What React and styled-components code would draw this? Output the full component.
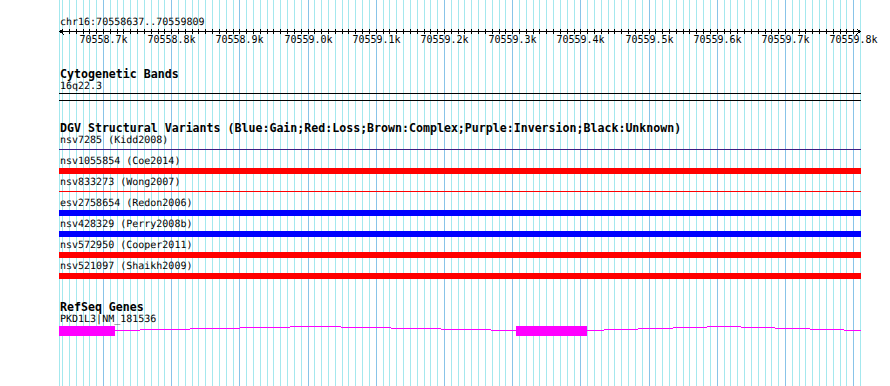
import styled, { createGlobalStyle } from "styled-components";

const START = 70558637;
const END = 70559809;
const LEFT = 60;
const SCALE = 800 / (END - START + 1);
const TRACK_X = 59;
const TRACK_W = 802;

const toX = (bp) => Math.round(LEFT + (bp - START) * SCALE);

const GlobalStyle = createGlobalStyle`
  html, body {
    margin: 0;
    padding: 0;
    background: #ffffff;
  }
`;

const Panel = styled.div`
  position: relative;
  width: 890px;
  height: 386px;
  overflow: hidden;
  background: #ffffff;
  font-family: "DejaVu Sans Mono", "Liberation Mono", monospace;
  color: #000000;
`;

const GridLayer = styled.svg`
  position: absolute;
  left: 0;
  top: 0;
  z-index: 0;
`;

const Content = styled.div`
  position: relative;
  z-index: 1;
  display: flex;
  flex-direction: column;
  padding: 16px 0 0 ${TRACK_X}px;
`;

const Label = styled.div`
  height: 13px;
  line-height: 13px;
  font-size: 10px;
  padding-left: 1px;
  white-space: nowrap;
  text-rendering: geometricPrecision;
`;

const Title = styled.div`
  height: 12px;
  line-height: 12px;
  font-size: 11.6px;
  font-weight: bold;
  padding-left: 1px;
  margin-top: ${(p) => p.$gap}px;
  white-space: nowrap;
`;

const Ruler = styled.svg`
  display: block;
  font-family: "DejaVu Sans Mono", "Liberation Mono", monospace;
`;

const CytoBand = styled.div`
  box-sizing: border-box;
  width: ${TRACK_W}px;
  height: 8px;
  border-top: 1px solid #000000;
  border-bottom: 1px solid #000000;
`;

const FeatureRow = styled.div`
  display: flex;
  flex-direction: column;
  height: 21px;
`;

const Glyph = styled.div`
  width: ${TRACK_W}px;
  height: ${(p) => (p.$thin ? 1 : 6)}px;
  margin-top: ${(p) => (p.$thin ? 2 : 0)}px;
  background: ${(p) => p.$color};
`;

const GeneTrack = styled.svg`
  display: block;
`;

const variants = [
  { name: "nsv7285 (Kidd2008)", color: "#3c1c84", thin: true },
  { name: "nsv1055854 (Coe2014)", color: "#ff0000" },
  { name: "nsv833273 (Wong2007)", color: "#ff0000", thin: true },
  { name: "esv2758654 (Redon2006)", color: "#0000ff" },
  { name: "nsv428329 (Perry2008b)", color: "#0000ff" },
  { name: "nsv572950 (Cooper2011)", color: "#ff0000" },
  { name: "nsv521097 (Shaikh2009)", color: "#ff0000" },
];

const ticks = [];
for (let bp = 70558640; bp <= 70559810; bp += 10) {
  ticks.push({ bp, x: toX(bp), major: bp % 100 === 0 });
}

function hatSteps(x0, x1, base, h) {
  const mid = (x0 + x1) / 2;
  const half = (x1 - x0) / 2;
  const out = [];
  for (let x = x0; x < x1; x++) {
    const y = base - Math.round(h * (1 - Math.abs(x + 0.5 - mid) / half));
    const last = out[out.length - 1];
    if (last && last.y === y) last.w++;
    else out.push({ x, w: 1, y });
  }
  return out;
}

function Grid() {
  return (
    <GridLayer width="890" height="386" shapeRendering="crispEdges">
      <rect x={TRACK_X} y="0" width="1" height="386" fill="#a4e8ee" />
      {ticks.map((t) => (
        <rect
          key={t.bp}
          x={t.x}
          y="0"
          width="1"
          height="386"
          fill={t.major ? "#88c4e8" : "#a4e8ee"}
        />
      ))}
    </GridLayer>
  );
}

function Scale() {
  const o = TRACK_X;
  const end = 861 - o;
  return (
    <Ruler width={TRACK_W + 30} height="16" shapeRendering="crispEdges">
      <rect x={1} y="2" width={end - 1} height="1" fill="#000" />
      <polyline points="5,-1 1,2.5 5,6" fill="none" stroke="#000" />
      <polyline points={`${end - 5},-1 ${end - 1},2.5 ${end - 5},6`} fill="none" stroke="#000" />
      {ticks
        .filter((t) => t.bp <= END)
        .map((t) => (
          <rect key={t.bp} x={t.x - o} y="0" width="1" height="5" fill="#000" />
        ))}
      {ticks
        .filter((t) => t.major)
        .map((t) => (
          <text
            key={t.bp}
            x={t.x - o + 0.5}
            y="14"
            fontSize="10"
            textAnchor="middle"
            fill="#000"
          >
            {(t.bp / 1000).toFixed(1)}k
          </text>
        ))}
    </Ruler>
  );
}

function Gene() {
  const o = TRACK_X;
  const exons = [
    [59, 115],
    [516, 587],
  ];
  const introns = [...hatSteps(115, 516, 4, 4), ...hatSteps(587, 861, 4, 4)];
  return (
    <GeneTrack width={TRACK_W} height="10" shapeRendering="crispEdges">
      {introns.map((s) => (
        <rect key={s.x} x={s.x - o} y={s.y} width={s.w} height="1" fill="#ff00ff" />
      ))}
      {exons.map(([a, b]) => (
        <rect key={a} x={a - o} y="0" width={b - a} height="10" fill="#ff00ff" />
      ))}
    </GeneTrack>
  );
}

export default function App() {
  return (
    <>
      <GlobalStyle />
      <Panel>
        <Grid />
        <Content>
          <Label>chr16:70558637..70559809</Label>
          <Scale />

          <Title $gap={23}>Cytogenetic Bands</Title>
          <Label>16q22.3</Label>
          <CytoBand />

          <Title $gap={21}>
            DGV Structural Variants (Blue:Gain;Red:Loss;Brown:Complex;Purple:Inversion;Black:Unknown)
          </Title>
          {variants.map((v) => (
            <FeatureRow key={v.name}>
              <Label>{v.name}</Label>
              <Glyph $color={v.color} $thin={v.thin} />
            </FeatureRow>
          ))}

          <Title $gap={20}>RefSeq Genes</Title>
          <Label>PKD1L3|NM_181536</Label>
          <Gene />
        </Content>
      </Panel>
    </>
  );
}
